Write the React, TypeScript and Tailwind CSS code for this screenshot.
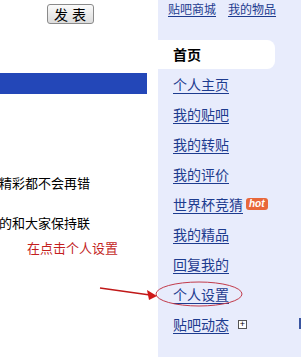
const MENU = [
    { label: "个人主页" },
    { label: "我的贴吧" },
    { label: "我的转贴" },
    { label: "我的评价" },
    { label: "世界杯竞猜", hot: true },
    { label: "我的精品" },
    { label: "回复我的" },
    { label: "个人设置" },
    { label: "贴吧动态", plus: true },
];

const font = "font-['SimSun','Noto_Sans_CJK_SC',sans-serif]";

export default function App() {
    return (
        <div className={`relative flex w-[301px] h-[357px] overflow-hidden bg-white ${font}`}>
            {/* left column */}
            <div className="w-[158px] shrink-0 flex flex-col">
                <div className="pl-[47px] pt-px">
                    <button className="w-[47px] h-[20px] border border-[#8a8a8a] rounded-[3px] bg-gradient-to-b from-[#fbfbfb] to-[#dcdcdc] text-[14px] leading-[18px] text-black tracking-[4px] pl-[3px]">
                        发表
                    </button>
                </div>
                <div className="mt-[48px] h-[21px] w-[147px] bg-[#2347b8]" />
                <p className="mt-[81px] text-[13px] leading-[16px] text-black whitespace-nowrap -ml-[1px]">
                    精彩都不会再错
                </p>
                <p className="mt-[24px] text-[13px] leading-[16px] text-black whitespace-nowrap -ml-[1px]">
                    的和大家保持联
                </p>
                <p className="mt-[9px] pl-[27px] text-[13px] leading-[16px] text-[#c41f1f] whitespace-nowrap">
                    在点击个人设置
                </p>
            </div>

            {/* sidebar */}
            <div className="flex-1 bg-[#e8ecfc] flex flex-col">
                <div className="flex gap-[12px] pl-[10px] h-[17px] items-center text-[12px] leading-[14px]">
                    <a className="text-[#1d3b8f] underline underline-offset-2">贴吧商城</a>
                    <a className="text-[#1d3b8f] underline underline-offset-2">我的物品</a>
                </div>
                <div className="mt-[23px] w-[117px] h-[29px] bg-white rounded-r-[8px] flex items-center pl-[15px] text-[14px] font-bold text-black">
                    首页
                </div>
                {MENU.map((item) => (
                    <div key={item.label} className="h-[30px] flex items-center pl-[15px] text-[14px] whitespace-nowrap">
                        <a className="text-[#1d3b8f] underline underline-offset-[3px]">{item.label}</a>
                        {item.hot && (
                            <span className="ml-[3px] h-[12px] px-[3px] rounded-[3px] bg-[#e8673a] text-white text-[10px] leading-[12px] font-bold italic font-['Liberation_Sans',sans-serif]">
                                hot
                            </span>
                        )}
                        {item.plus && (
                            <span className="ml-[9px] w-[9px] h-[9px] border border-[#555] bg-white flex items-center justify-center text-[9px] leading-none text-black font-['Liberation_Sans',sans-serif]">
                                +
                            </span>
                        )}
                    </div>
                ))}
            </div>

            {/* annotation overlay */}
            <svg className="absolute left-0 top-0 pointer-events-none" width="301" height="357">
                <ellipse cx="199" cy="294" rx="43" ry="12" fill="none" stroke="#c23a4a" strokeWidth="1" />
                <line x1="100" y1="288" x2="150" y2="295" stroke="#c01818" strokeWidth="1.3" />
                <polygon points="157,296 147,290 149,300" fill="#d01818" />
            </svg>
            <div className="absolute left-[299px] top-[318px] w-[2px] h-[11px] bg-[#3a55a0]" />
        </div>
    );
}
